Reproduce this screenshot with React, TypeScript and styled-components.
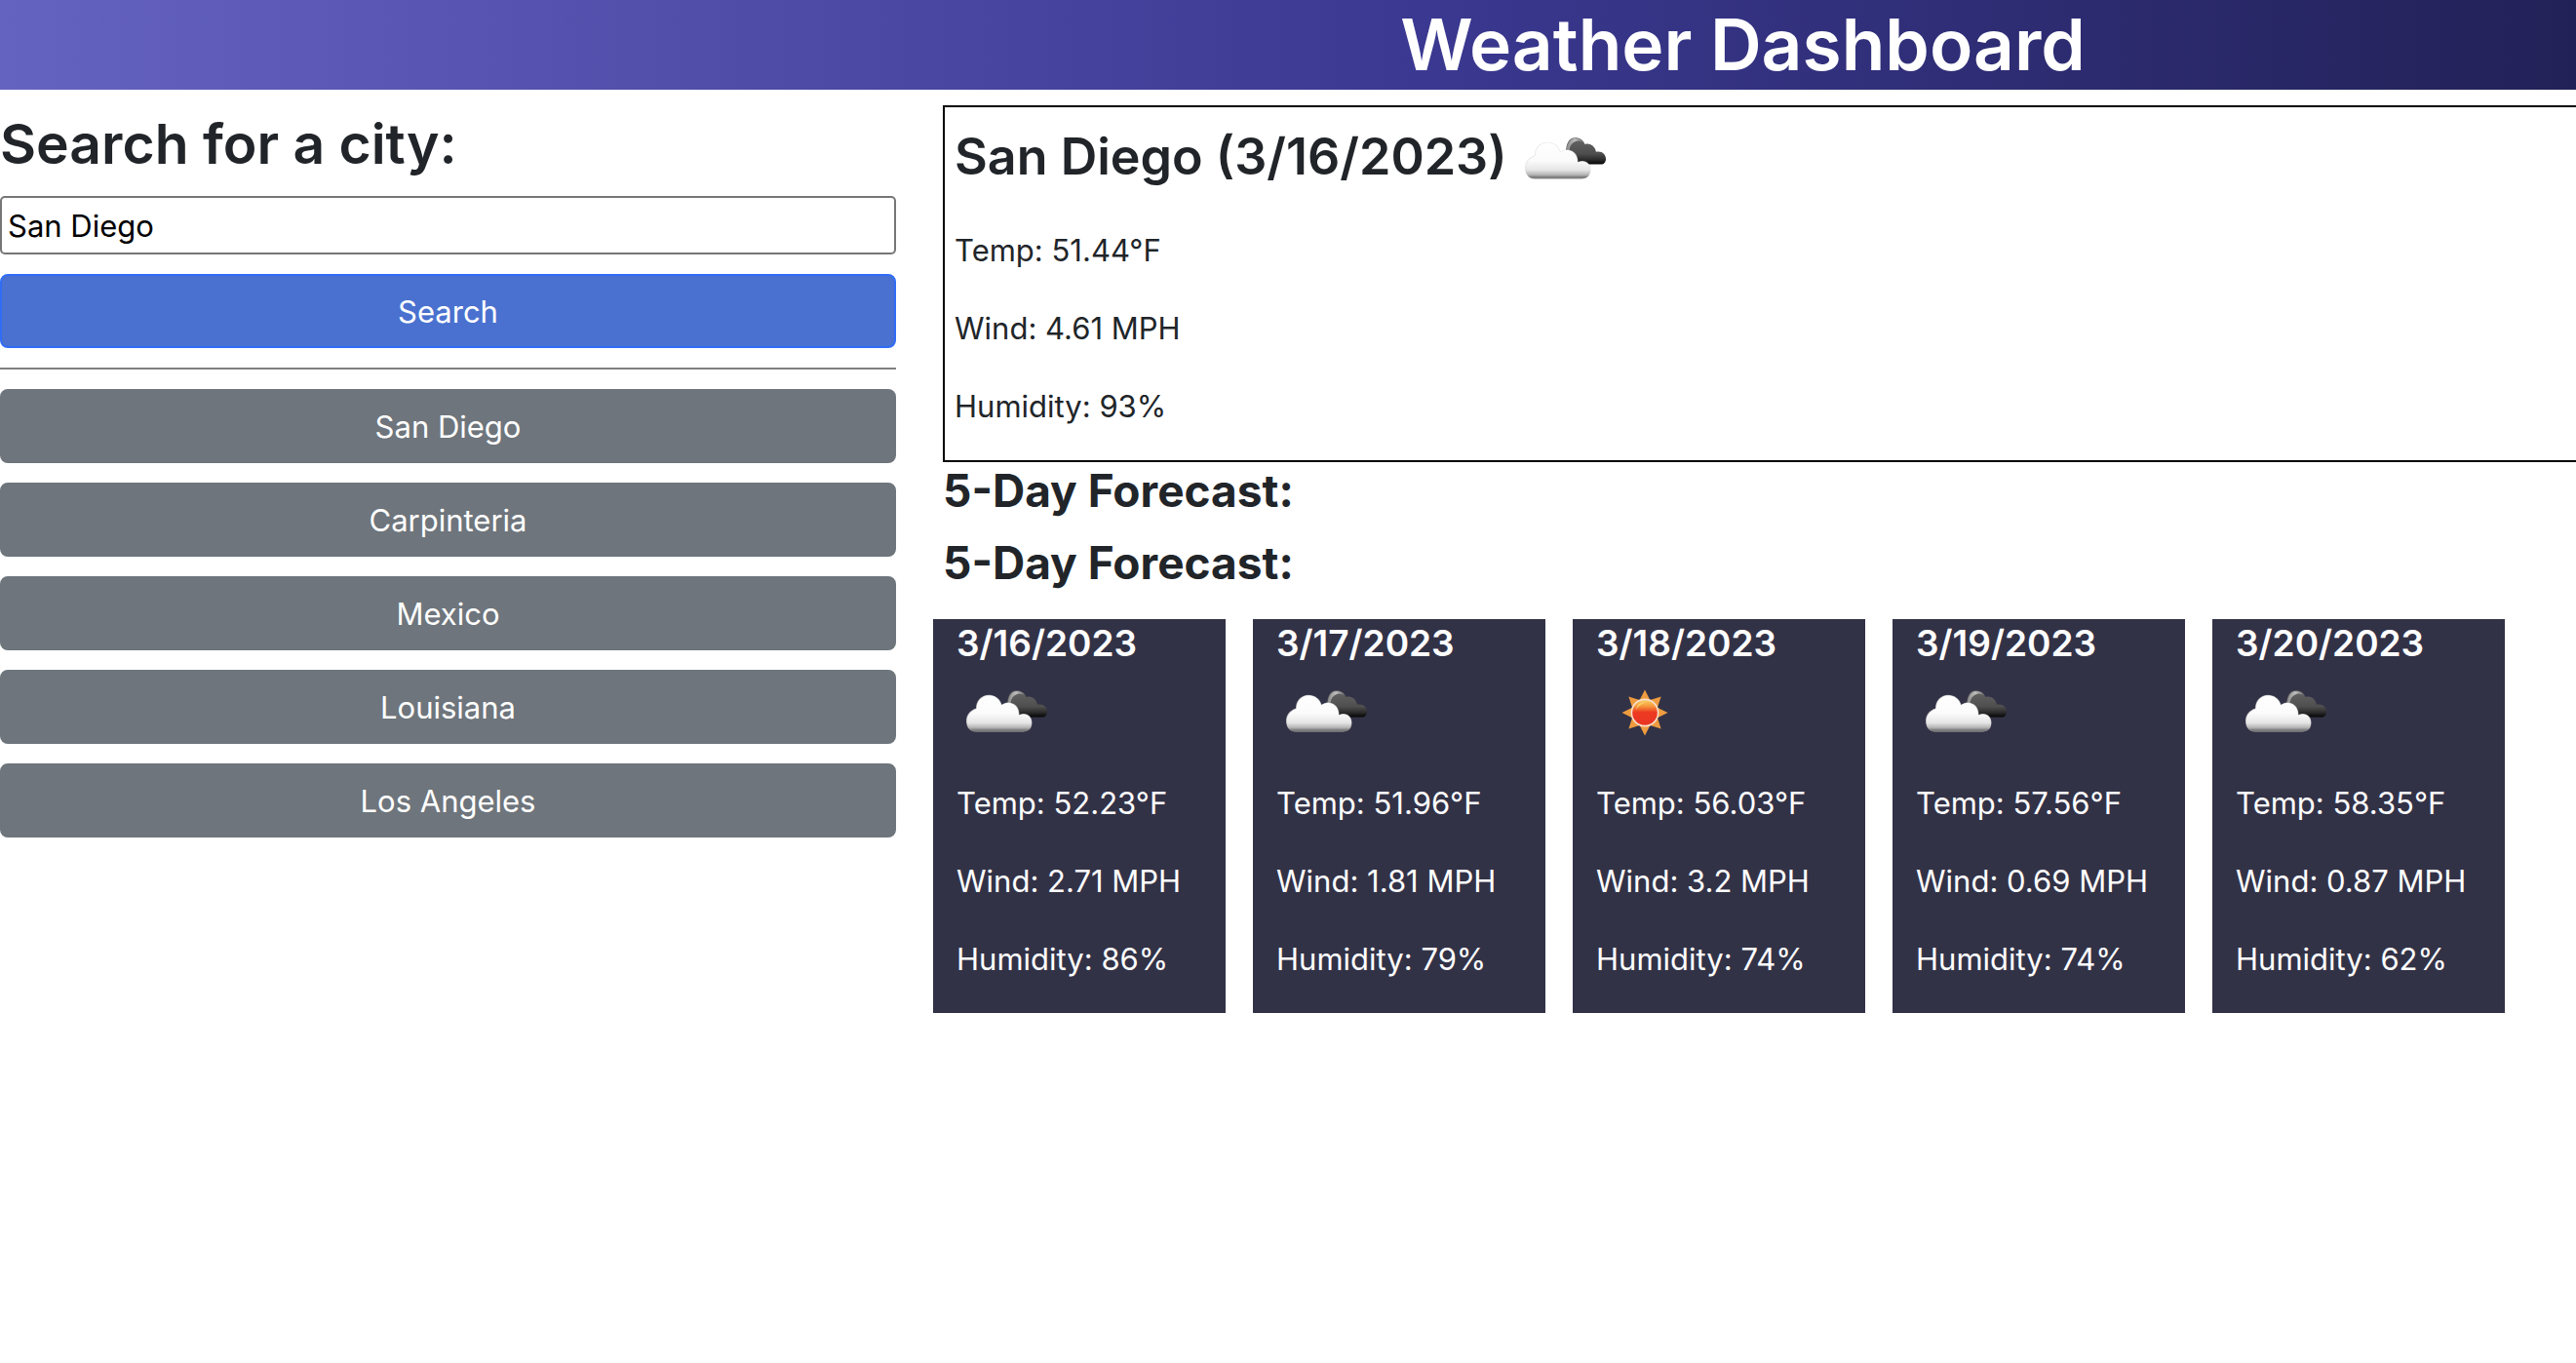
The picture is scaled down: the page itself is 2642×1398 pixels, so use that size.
import React, { useState } from "react";
import styled, { createGlobalStyle } from "styled-components";

const GlobalStyle = createGlobalStyle`
  *, *::before, *::after { box-sizing: border-box; }
  body {
    margin: 0;
    background: #ffffff;
    color: #212529;
    font-family: Inter, "Liberation Sans", sans-serif;
    font-size: 31px;
    line-height: 50px;
    overflow-x: hidden;
  }
  h1, h2, h3, h4, p { margin: 0; }
`;

const Header = styled.header`
  display: grid;
  grid-template-columns: 6fr 11fr;
  column-gap: 38px;
  background: linear-gradient(to right, #6563c0, #3b3992 54%, #222157);
`;

const Title = styled.h1`
  grid-column: 2;
  padding-right: 24px;
  color: #ffffff;
  font-size: 73px;
  font-weight: 600;
  line-height: 92px;
  text-align: center;
`;

const Layout = styled.div`
  display: grid;
  grid-template-columns: 6fr 11fr;
  column-gap: 38px;
  align-items: start;
  padding-top: 16px;
`;

const Sidebar = styled.aside`
  display: flex;
  flex-direction: column;
  gap: 20px;
`;

const SearchForm = styled.form`
  display: flex;
  flex-direction: column;
  gap: 20px;
`;

const Field = styled.div`
  display: flex;
  flex-direction: column;
  gap: 13px;
`;

const SearchLabel = styled.label`
  font-size: 57px;
  font-weight: 600;
  line-height: 80px;
`;

const SearchInput = styled.input`
  height: 60px;
  padding: 2px 6px;
  border: 2px solid #767676;
  border-radius: 5px;
  background: #ffffff;
  color: #000000;
  font: inherit;
`;

const Button = styled.button<{ $primary?: boolean }>`
  height: 76px;
  padding: 12px 24px 10px;
  border: 2px solid ${(p) => (p.$primary ? "#2f6df6" : "#6e757c")};
  border-radius: 8px;
  background: ${(p) => (p.$primary ? "#4a71cf" : "#6e757c")};
  color: #ffffff;
  font: inherit;
  cursor: pointer;
`;

const Divider = styled.hr`
  width: 100%;
  height: 2px;
  margin: 0;
  border: 0;
  background: #808082;
`;

const Current = styled.section`
  margin-left: 10px;
  padding: 8px 10px 0;
  border: 2px solid #000000;
  border-right: 0;
`;

const CurrentHeading = styled.div`
  display: flex;
  gap: 8px;
  margin-bottom: 14px;
`;

const CityName = styled.h2`
  font-size: 52px;
  font-weight: 600;
  line-height: 86px;
`;

const Reading = styled.p`
  margin-bottom: 30px;
`;

const ForecastTitle = styled.h3`
  margin: 0 0 16px 10px;
  font-size: 46px;
  font-weight: 700;
  line-height: 58px;
`;

const CardRow = styled.div`
  display: flex;
  gap: 28px;
  padding-top: 13px;
`;

const Card = styled.article`
  width: 300px;
  padding-left: 24px;
  background: #323247;
  color: #ffffff;
  white-space: nowrap;
`;

const CardDate = styled.h4`
  font-size: 37px;
  font-weight: 600;
  line-height: 50px;
`;

const Icon = styled.svg`
  display: block;
  flex: none;
  width: 100px;
  height: 100px;
`;

const CardIcon = styled.div`
  margin-bottom: 14px;
`;

type Sky = "clouds" | "clear";

function WeatherIcon({ sky, id }: { sky: Sky; id: string }) {
  if (sky === "clear") {
    const points = Array.from({ length: 16 }, (_, i) => {
      const r = i % 2 === 0 ? 23.5 : 14;
      const a = (i * Math.PI) / 8;
      return `${(50 + r * Math.sin(a)).toFixed(2)},${(48 - r * Math.cos(a)).toFixed(2)}`;
    }).join(" ");
    return (
      <Icon viewBox="0 2 100 100" role="img" aria-label="Clear sky">
        <defs>
          <linearGradient id={`${id}-disc`} x1="0" y1="0" x2="0" y2="1">
            <stop offset="0" stopColor="#fbd36a" />
            <stop offset="0.25" stopColor="#f59a3c" />
            <stop offset="0.48" stopColor="#ec3a22" />
            <stop offset="1" stopColor="#ea3323" />
          </linearGradient>
        </defs>
        <polygon points={points} fill="#ee9c3f" />
        <circle cx="50" cy="48" r="13.6" fill={`url(#${id}-disc)`} stroke="#f8dfcb" strokeWidth="1.6" />
        <path d="M41 45 C42 39 46 37 51 37.5 C47 38.5 43 41 41 45 Z" fill="#fbe07c" opacity="0.7" />
      </Icon>
    );
  }
  return (
    <Icon viewBox="0 2 100 100" role="img" aria-label="Broken clouds">
      <defs>
        <linearGradient id={`${id}-front`} x1="0" y1="29" x2="0" y2="68" gradientUnits="userSpaceOnUse">
          <stop offset="0" stopColor="#ffffff" />
          <stop offset="0.5" stopColor="#fbfbfb" />
          <stop offset="0.75" stopColor="#e6e6e6" />
          <stop offset="0.88" stopColor="#b4b4b4" />
          <stop offset="0.95" stopColor="#757575" />
          <stop offset="1" stopColor="#707070" stopOpacity="0.5" />
        </linearGradient>
        <linearGradient id={`${id}-back`} x1="0" y1="25" x2="0" y2="53" gradientUnits="userSpaceOnUse">
          <stop offset="0" stopColor="#666666" />
          <stop offset="0.6" stopColor="#4e4e4e" />
          <stop offset="0.82" stopColor="#2a2a2a" />
          <stop offset="1" stopColor="#000000" />
        </linearGradient>
        <linearGradient id={`${id}-edge`} x1="53" y1="0" x2="71" y2="0" gradientUnits="userSpaceOnUse">
          <stop offset="0" stopColor="#8c8c8c" />
          <stop offset="0.45" stopColor="#bdbdbd" />
          <stop offset="1" stopColor="#777777" />
        </linearGradient>
        <filter id={`${id}-glow`} x="-10%" y="-10%" width="120%" height="120%">
          <feGaussianBlur stdDeviation="0.7" />
        </filter>
      </defs>
      <path
        d="M52 41 C52 31 55.5 25.3 61.5 25.3 C66.5 25.3 70 28 71.5 32 C76 30.5 81.5 33 83 39.8 C89 38.5 93 42.5 93 47 C93 50.5 91 52.5 88 52.5 L60 52.5 Z"
        fill={`url(#${id}-back)`}
      />
      <path
        d="M52.5 38 C53.5 30 57 26 61.5 26 C65 26 68 27.3 70 30 C66.5 28 63.5 28 61 29.5 C57 31.5 55.8 35 55.5 39 Z"
        fill={`url(#${id}-edge)`}
      />
      <path
        d="M20 67.5 C13 67.5 10 62 10 56.5 C10 50 14 45.5 20 43.5 C20 35 26 29.7 33 29.7 C39.5 29.7 44.5 33.5 46.5 39.7 C48.5 38 51 37.5 54 37.5 C60.5 38 64.7 43.5 64.5 50 C66 49.3 67.5 49 69 49 C74 49 77.5 53 77.5 58 C77.5 64 74 67.5 68 67.5 Z"
        fill="#d6d6d6"
        opacity="0.75"
        filter={`url(#${id}-glow)`}
      />
      <path
        d="M20 67.5 C13.5 67.5 10.6 62 10.6 56.5 C10.6 50.5 14.5 46 20.5 44 C20.5 35.5 26.4 30.2 33 30.2 C39.5 30.2 44.2 34 46.2 40.3 C48.5 38.4 51 38 54 38 C60.2 38.5 64.2 44 64 50.6 C66 49.7 67.5 49.5 69 49.5 C73.8 49.5 77 53.4 77 58 C77 64 73.8 67.5 68 67.5 Z"
        fill={`url(#${id}-front)`}
      />
    </Icon>
  );
}

const history = ["San Diego", "Carpinteria", "Mexico", "Louisiana", "Los Angeles"];

const forecast: { date: string; sky: Sky; temp: string; wind: string; humidity: string }[] = [
  { date: "3/16/2023", sky: "clouds", temp: "52.23", wind: "2.71", humidity: "86" },
  { date: "3/17/2023", sky: "clouds", temp: "51.96", wind: "1.81", humidity: "79" },
  { date: "3/18/2023", sky: "clear", temp: "56.03", wind: "3.2", humidity: "74" },
  { date: "3/19/2023", sky: "clouds", temp: "57.56", wind: "0.69", humidity: "74" },
  { date: "3/20/2023", sky: "clouds", temp: "58.35", wind: "0.87", humidity: "62" },
];

function Readings({ temp, wind, humidity }: { temp: string; wind: string; humidity: string }) {
  return (
    <>
      <Reading>{`Temp: ${temp}°F`}</Reading>
      <Reading>{`Wind: ${wind} MPH`}</Reading>
      <Reading>{`Humidity: ${humidity}%`}</Reading>
    </>
  );
}

export default function App() {
  const [city, setCity] = useState("San Diego");

  return (
    <>
      <GlobalStyle />
      <Header>
        <Title>Weather Dashboard</Title>
      </Header>
      <Layout>
        <Sidebar>
          <SearchForm onSubmit={(e) => e.preventDefault()}>
            <Field>
              <SearchLabel htmlFor="city">Search for a city:</SearchLabel>
              <SearchInput id="city" type="text" value={city} onChange={(e) => setCity(e.target.value)} />
            </Field>
            <Button $primary type="submit">Search</Button>
          </SearchForm>
          <Divider />
          {history.map((name) => (
            <Button key={name} type="button" onClick={() => setCity(name)}>
              {name}
            </Button>
          ))}
        </Sidebar>
        <main>
          <Current>
            <CurrentHeading>
              <CityName>San Diego (3/16/2023)</CityName>
              <WeatherIcon sky="clouds" id="current" />
            </CurrentHeading>
            <Readings temp="51.44" wind="4.61" humidity="93" />
          </Current>
          <ForecastTitle>5-Day Forecast:</ForecastTitle>
          <ForecastTitle>5-Day Forecast:</ForecastTitle>
          <CardRow>
            {forecast.map((day, i) => (
              <Card key={day.date}>
                <CardDate>{day.date}</CardDate>
                <CardIcon>
                  <WeatherIcon sky={day.sky} id={`day${i}`} />
                </CardIcon>
                <Readings temp={day.temp} wind={day.wind} humidity={day.humidity} />
              </Card>
            ))}
          </CardRow>
        </main>
      </Layout>
    </>
  );
}
